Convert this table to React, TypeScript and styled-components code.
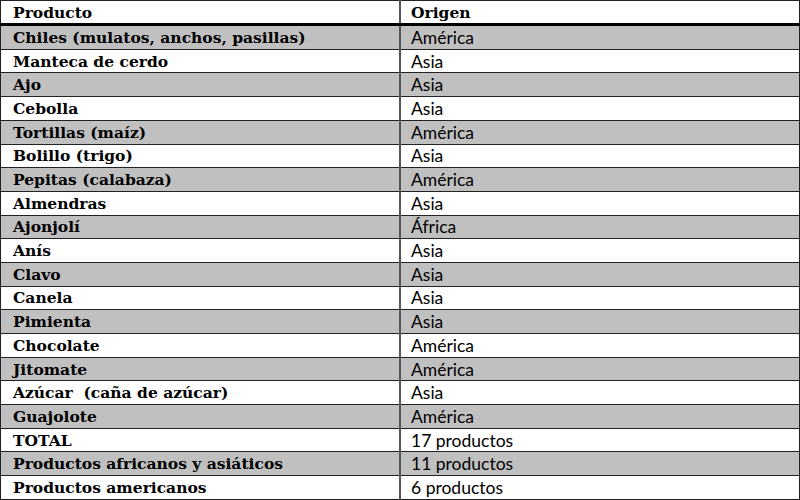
import React from 'react';
import styled, { createGlobalStyle } from 'styled-components';

const GlobalStyle = createGlobalStyle`
    html, body {
        margin: 0;
        padding: 0;
        background: #ffffff;
    }
`;

const Table = styled.table`
    width: 800px;
    height: 500px;
    border-collapse: collapse;
    table-layout: fixed;
    color: #000;
`;

const Row = styled.tr<{ $shaded: boolean }>`
    background: ${(p) => (p.$shaded ? '#c0c0c0' : '#ffffff')};
`;

const HeadCell = styled.th<{ $right?: boolean }>`
    height: 22px;
    padding: 0 0 0 ${(p) => (p.$right ? '10px' : '12px')};
    text-align: left;
    font-family: 'DejaVu Serif', serif;
    font-weight: bold;
    font-size: 15.5px;
    border: 1px solid #222;
    border-bottom: 3px solid #000;
    border-left: ${(p) => (p.$right ? '2px solid #555' : '1px solid #222')};
`;

const NameCell = styled.td`
    padding: 0 0 0 12px;
    font-family: 'DejaVu Serif', serif;
    font-weight: bold;
    font-size: 15.5px;
    border: 1px solid #222;
    white-space: pre;
`;

const OriginCell = styled.td`
    padding: 0 0 0 10px;
    font-family: Lato, 'Open Sans', sans-serif;
    font-size: 17.5px;
    border: 1px solid #222;
    border-left: 2px solid #555;
`;

const rows: [string, string][] = [
    ['Chiles (mulatos, anchos, pasillas)', 'América'],
    ['Manteca de cerdo', 'Asia'],
    ['Ajo', 'Asia'],
    ['Cebolla', 'Asia'],
    ['Tortillas (maíz)', 'América'],
    ['Bolillo (trigo)', 'Asia'],
    ['Pepitas (calabaza)', 'América'],
    ['Almendras', 'Asia'],
    ['Ajonjolí', 'África'],
    ['Anís', 'Asia'],
    ['Clavo', 'Asia'],
    ['Canela', 'Asia'],
    ['Pimienta', 'Asia'],
    ['Chocolate', 'América'],
    ['Jitomate', 'América'],
    ['Azúcar  (caña de azúcar)', 'Asia'],
    ['Guajolote', 'América'],
    ['TOTAL', '17 productos'],
    ['Productos africanos y asiáticos', '11 productos'],
    ['Productos americanos', '6 productos'],
];

export default function App() {
    return (
        <>
            <GlobalStyle />
            <Table>
                <thead>
                    <Row $shaded={false}>
                        <HeadCell>Producto</HeadCell>
                        <HeadCell $right>Origen</HeadCell>
                    </Row>
                </thead>
                <tbody>
                    {rows.map(([name, origin], i) => (
                        <Row key={name} $shaded={i % 2 === 0}>
                            <NameCell>{name}</NameCell>
                            <OriginCell>{origin}</OriginCell>
                        </Row>
                    ))}
                </tbody>
            </Table>
        </>
    );
}
